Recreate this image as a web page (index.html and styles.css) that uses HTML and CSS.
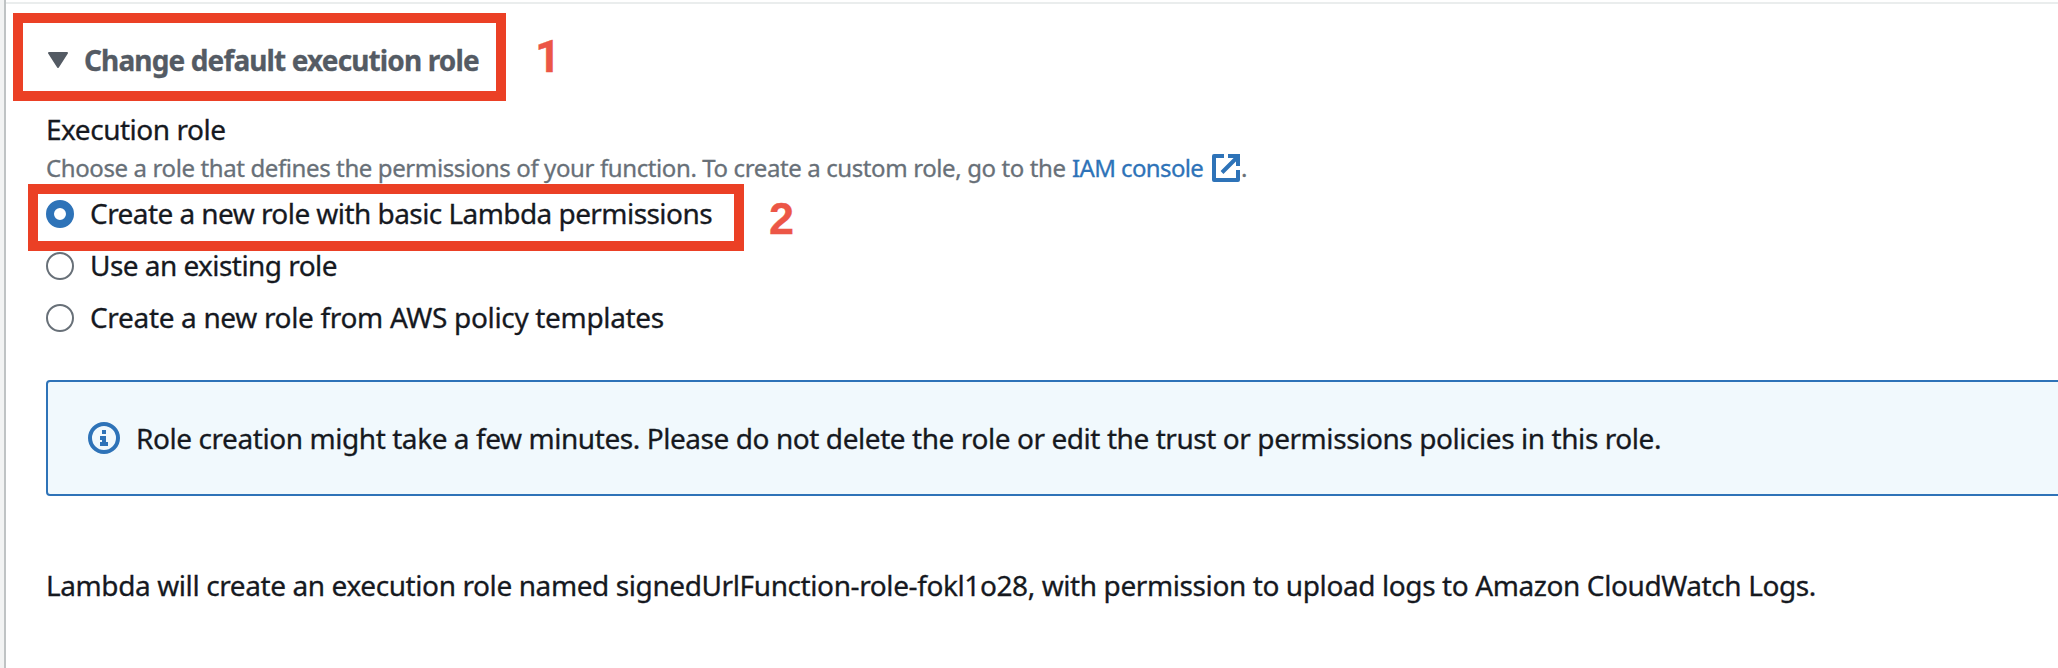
FILE: index.html
```
<!DOCTYPE html>
<html lang="en">
<head>
<meta charset="utf-8">
<title>Execution role</title>
<link rel="stylesheet" href="styles.css">
</head>
<body>
<main class="panel">
  <div class="expander">
    <svg class="caret" width="20" height="16" viewBox="0 0 20 16"><path d="M1 1h18l-9 14z" fill="#545b64" stroke="#545b64" stroke-width="2" stroke-linejoin="round"/></svg>
    <h2 class="title">Change default execution role</h2>
  </div>
  <div class="label">Execution role</div>
  <div class="hint"><span class="hint-text">Choose a role that defines the permissions of your function. To create a custom role, go to the</span><a class="link">IAM console</a><svg class="external" width="28" height="28" viewBox="0 0 28 28" fill="none" stroke="#2e73b8" stroke-width="4"><path d="M12 2H2v24h24V16" stroke-linejoin="round"/><path d="M16 2h10v10M10 18.500L25.500 3"/></svg><span class="dot">.</span></div>
  <div class="options">
    <label class="option"><span class="radio checked"></span><span class="basic">Create a new role with basic Lambda permissions</span></label>
    <label class="option"><span class="radio"></span><span class="existing">Use an existing role</span></label>
    <label class="option"><span class="radio"></span><span class="template">Create a new role from AWS policy templates</span></label>
  </div>
  <div class="alert">
    <svg width="32" height="32" viewBox="0 0 32 32"><circle cx="16" cy="16" r="14" fill="none" stroke="#2e73b8" stroke-width="4"/><path d="M14 8h4v4h-4zM12 14h6v6h2v4h-8v-4h2v-2h-2z" fill="#2e73b8"/></svg>
    <span class="alert-text">Role creation might take a few minutes. Please do not delete the role or edit the trust or permissions policies in this role.</span>
  </div>
  <p class="summary">Lambda will create an execution role named signedUrlFunction-role-fokl1o28, with permission to upload logs to Amazon CloudWatch Logs.</p>
</main>
<div class="mark mark-one"></div>
<div class="num num-one">1</div>
<div class="mark mark-two"></div>
<div class="num num-two">2</div>
</body>
</html>
```
FILE: styles.css
```
* { box-sizing: border-box; }
body {
  margin: 0;
  height: 668px;
  padding: 2px 0 0 4px;
  overflow: hidden;
  background: #f2f3f3;
  font: 400 28px/36px "Noto Sans", sans-serif;
  -webkit-text-stroke: 0.3px;
  color: #16191f;
  white-space: nowrap;
}
.panel {
  height: 668px;
  margin-top: -2px;
  padding: 2px 0 0 40px;
  border-left: 2px solid #bfc3c4;
  background: linear-gradient(#eaeded, #eaeded) 0 2px / 100% 2px no-repeat #fff;
}
.expander {
  display: flex;
  align-items: center;
  gap: 16px;
  height: 36px;
  margin: 40px 0 0 2px;
}
.title {
  margin: 0;
  font-size: 28px;
  font-weight: 700;
  letter-spacing: -0.87px;
  color: #545b64;
}
.label { margin-top: 33px; letter-spacing: -0.48px; }
.hint {
  display: flex;
  height: 30px;
  margin-top: 6px;
  font-size: 24px;
  line-height: 30px;
  color: #687078;
}
.hint-text { width: 1026px; letter-spacing: -0.39px; }
.link { width: 140px; letter-spacing: -0.62px; color: #2e73b8; }
.external { margin-top: 1px; }
.dot { margin-left: 1px; }
.options {
  display: grid;
  gap: 16px;
  margin-top: 12px;
}
.option { display: flex; gap: 16px; }
.radio {
  width: 28px;
  height: 28px;
  margin-top: 5px;
  border: 2px solid #687078;
  border-radius: 50%;
}
.checked { border: 8px solid #2e73b8; }
.basic { letter-spacing: -0.56px; }
.existing { letter-spacing: -0.55px; }
.template { letter-spacing: -0.33px; }
.alert {
  display: flex;
  align-items: center;
  gap: 16px;
  height: 116px;
  margin: 45px -4px 0 0;
  padding-left: 40px;
  border: 2px solid #2e73b8;
  border-radius: 4px;
  background: #f1f9fd;
}
.alert-text { margin-top: -1px; letter-spacing: -0.43px; }
.summary { margin: 71px 0 0; letter-spacing: -0.4px; }
/* Callout frames and step numbers sit over the panel. */
.mark { position: absolute; border: 10px solid #eb4025; }
.mark-one { left: 13px; top: 13px; width: 493px; height: 88px; }
.mark-two { left: 28px; top: 184px; width: 716px; height: 67px; }
.num {
  position: absolute;
  font: 700 45px/50px "Liberation Sans", Arial, sans-serif;
  color: #ec5646;
}
.num-one { left: 535px; top: 32px; font-family: Roboto, sans-serif; }
.num-two { left: 769px; top: 194px; }
```
